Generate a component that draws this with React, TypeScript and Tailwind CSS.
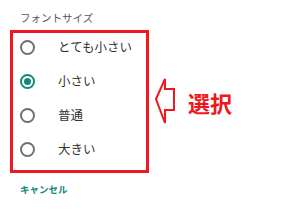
import React from 'react';

const options = ['とても小さい', '小さい', '普通', '大きい'];

function Radio({ checked }: { checked: boolean }) {
  if (checked) {
    return (
      <span className="flex h-[15px] w-[15px] items-center justify-center rounded-full border-2 border-[#12897b]">
        <span className="h-[7px] w-[7px] rounded-full bg-[#12897b]" />
      </span>
    );
  }
  return <span className="block h-[15px] w-[15px] rounded-full border-2 border-[#707070]" />;
}

export default function App() {
  return (
    <div
      className="h-[210px] w-[300px] overflow-hidden bg-white"
      style={{ fontFamily: '"Noto Sans CJK JP", "Noto Sans", sans-serif' }}
    >
      <p className="pl-[20px] pt-[11px] text-[10.5px] leading-[14px] text-[#555]">フォントサイズ</p>

      <div className="mt-[5px] flex items-center">
        <div className="ml-[10px] h-[143px] w-[139px] border-[3px] border-[#f01820]">
          <div className="-mt-[3px] flex flex-col">
            {options.map((o, i) => (
              <div key={o} className="flex h-[34px] items-center">
                <span className="ml-[7px]">
                  <Radio checked={i === 1} />
                </span>
                <span className="ml-[23px] text-[12.5px] leading-none text-[#333]">{o}</span>
              </div>
            ))}
          </div>
        </div>

        <svg width="21" height="49" viewBox="0 0 21 49" className="ml-[6px]">
          <path
            d="M1 22 L10 2 L10 12 L19 12 L19 33 L10 33 L10 46 Z"
            fill="none"
            stroke="#f01820"
            strokeWidth="2"
            strokeLinejoin="miter"
          />
        </svg>
        <span className="ml-[12px] text-[22px] font-bold leading-none text-[#f01820]">選択</span>
      </div>

      <p className="pl-[20px] pt-[10px] text-[9.5px] font-bold leading-[12px] text-[#12897b]">キャンセル</p>
    </div>
  );
}
